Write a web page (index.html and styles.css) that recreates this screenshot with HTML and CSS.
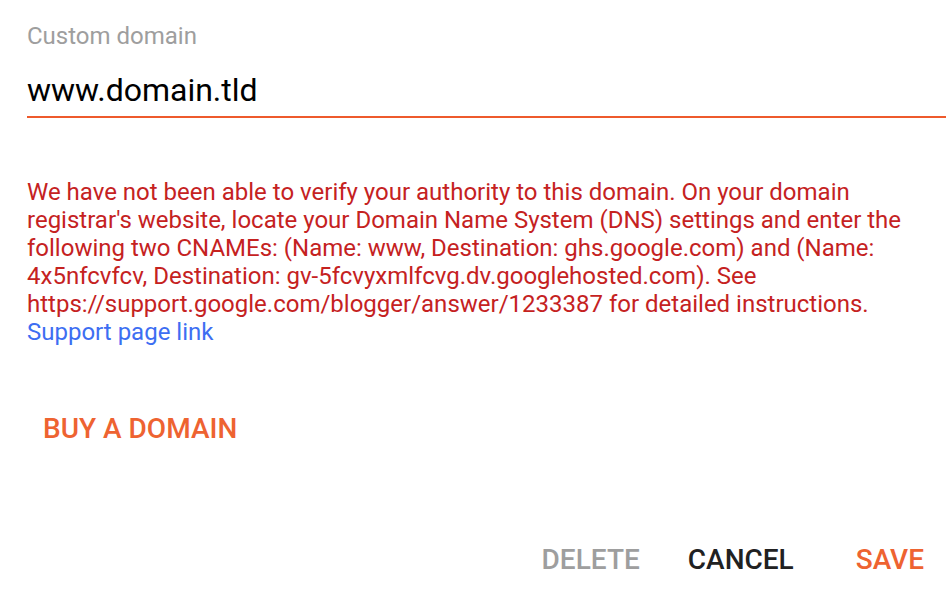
FILE: index.html
```html
<!DOCTYPE html>
<html>
<head>
<meta charset="utf-8">
<link rel="stylesheet" href="styles.css">
</head>
<body>
<div class="dialog">
  <div class="field">
    <label class="label">Custom domain</label>
    <div class="input">www.domain.tld</div>
  </div>
  <p class="error">We have not been able to verify your authority to this domain. On your domain registrar's website, locate your Domain Name System (DNS) settings and enter the following two CNAMEs: (Name: www, Destination: ghs.google.com) and (Name: 4x5nfcvfcv, Destination: gv-5fcvyxmlfcvg.dv.googlehosted.com). See https://support.google.com/blogger/answer/1233387 for detailed instructions.<br><a class="link" href="#">Support page link</a></p>
  <div class="buy"><span class="btn btn-orange">BUY A DOMAIN</span></div>
  <div class="actions">
    <span class="btn btn-disabled">DELETE</span>
    <span class="btn btn-dark">CANCEL</span>
    <span class="btn btn-orange btn-save">SAVE</span>
  </div>
</div>
</body>
</html>
```
FILE: styles.css
```css
html, body {
  margin: 0;
  padding: 0;
  background: #fff;
  font-family: Roboto, "Liberation Sans", sans-serif;
}
.dialog {
  width: 946px;
  height: 600px;
  overflow: hidden;
  display: flex;
  flex-direction: column;
}
.field {
  padding-left: 27px;
  padding-top: 22px;
}
.label {
  display: block;
  font-size: 24px;
  line-height: 28px;
  color: #9e9e9e;
}
.input {
  font-size: 32px;
  line-height: 40px;
  color: #000;
  margin-top: 20px;
  padding-bottom: 6px;
  border-bottom: 2px solid #ee5a2c;
}
.error {
  margin: 60px 0 0 27px;
  width: 915px;
  font-size: 24px;
  line-height: 28px;
  color: #c5221f;
}
.link {
  color: #3d6ef2;
  text-decoration: none;
}
.btn {
  font-size: 28px;
  font-weight: 500;
  line-height: 32px;
}
.btn-orange { color: #ee6331; }
.btn-dark { color: #212121; }
.btn-disabled { color: #9e9e9e; }
.buy {
  padding-left: 43px;
  margin-top: 67px;
}
.actions {
  display: flex;
  justify-content: flex-end;
  gap: 48px;
  padding-right: 22px;
  margin-top: 99px;
}
.btn-save {
  margin-left: 14px;
}
```
